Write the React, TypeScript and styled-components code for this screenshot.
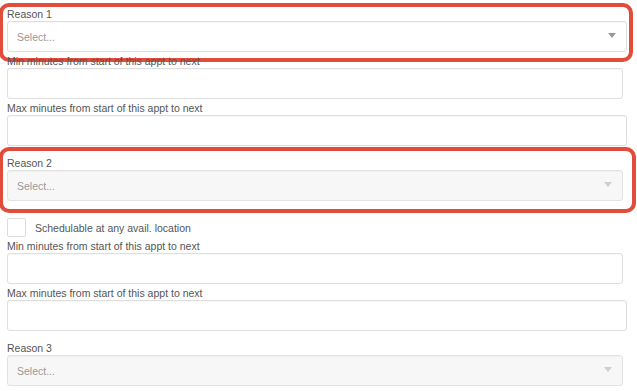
import React from 'react';
import styled, { createGlobalStyle } from 'styled-components';

const GlobalStyle = createGlobalStyle`
  html, body {
    margin: 0;
    padding: 0;
    background: #ffffff;
  }
  body {
    font-family: "Liberation Sans", Arial, sans-serif;
    font-size: 10.5px;
    color: #555555;
  }
`;

const Page = styled.div`
  position: relative;
  width: 637px;
  height: 391px;
  box-sizing: border-box;
  padding: 5px 10px 0 7px;
  overflow: hidden;
`;

const Field = styled.div<{ $mt?: number }>`
  position: relative;
  display: flex;
  flex-direction: column;
  margin-top: ${p => p.$mt ?? 0}px;
`;

const Label = styled.label`
  display: block;
  padding-top: 2px;
  line-height: 14px;
  font-size: 10.5px;
  color: #555555;
  white-space: nowrap;
`;

const Control = styled.div<{ $narrow?: boolean }>`
  box-sizing: border-box;
  height: 31px;
  margin-right: ${p => (p.$narrow ? 4 : 0)}px;
  border: 1px solid #dedede;
  border-radius: 3px;
  background: #ffffff;
  box-shadow: inset 0 1px 1px rgba(0, 0, 0, 0.03);
`;

const SelectBox = styled(Control)<{ $disabled?: boolean }>`
  display: flex;
  align-items: center;
  justify-content: space-between;
  padding: 0 10px 0 9px;
  background: ${p => (p.$disabled ? '#f7f7f7' : '#ffffff')};
  border-color: ${p => (p.$disabled ? '#e2e2e2' : '#dedede')};
`;

const Placeholder = styled.span`
  font-size: 10.5px;
  color: #999999;
`;

const Caret = styled.svg`
  width: 8px;
  height: 5px;
  margin-bottom: 3px;
`;

const CheckRow = styled.div`
  display: flex;
  align-items: center;
  gap: 9px;
  height: 19px;
  margin-top: 17px;
`;

const CheckBox = styled.span`
  box-sizing: border-box;
  width: 19px;
  height: 19px;
  border: 1px solid #dcdcdc;
  border-radius: 2px;
  background: #ffffff;
`;

const CheckText = styled.span`
  line-height: 14px;
  color: #555555;
`;

const Highlight = styled.div<{ $top: number; $right: number; $bottom: number; $left: number }>`
  position: absolute;
  top: ${p => p.$top}px;
  right: ${p => p.$right}px;
  bottom: ${p => p.$bottom}px;
  left: ${p => p.$left}px;
  border: 4px solid #e24c3b;
  border-radius: 10px;
  pointer-events: none;
`;

const ReasonSelect = ({ disabled, narrow }: { disabled?: boolean; narrow?: boolean }) => (
  <SelectBox $disabled={disabled} $narrow={narrow}>
    <Placeholder>Select...</Placeholder>
    <Caret viewBox="0 0 8 5">
      <polygon points="0,0 8,0 4,5" fill={disabled ? '#cfcfcf' : '#999999'} />
    </Caret>
  </SelectBox>
);

export default function App() {
  return (
    <>
      <GlobalStyle />
      <Page>
        <Field>
          <Label>Reason 1</Label>
          <ReasonSelect />
          <Highlight $top={-2} $right={-6} $bottom={-10} $left={-8} />
        </Field>
        <Field>
          <Label>Min minutes from start of this appt to next</Label>
          <Control $narrow />
        </Field>
        <Field>
          <Label>Max minutes from start of this appt to next</Label>
          <Control />
        </Field>

        <Field $mt={8}>
          <Label>Reason 2</Label>
          <ReasonSelect disabled narrow />
          <Highlight $top={-7} $right={-9} $bottom={-12} $left={-8} />
        </Field>
        <CheckRow>
          <CheckBox />
          <CheckText>Schedulable at any avail. location</CheckText>
        </CheckRow>
        <Field>
          <Label>Min minutes from start of this appt to next</Label>
          <Control $narrow />
        </Field>
        <Field>
          <Label>Max minutes from start of this appt to next</Label>
          <Control />
        </Field>

        <Field $mt={8}>
          <Label>Reason 3</Label>
          <ReasonSelect disabled narrow />
        </Field>
      </Page>
    </>
  );
}
